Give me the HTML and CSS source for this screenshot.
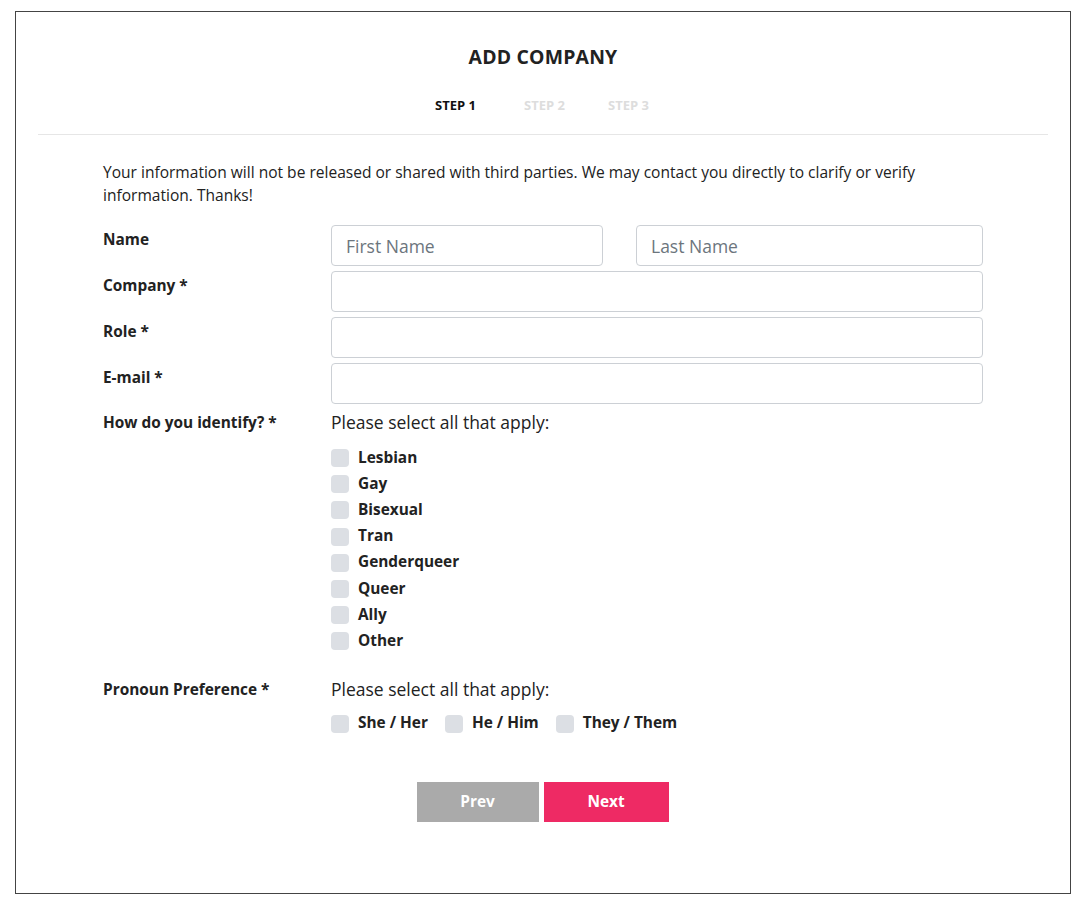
FILE: index.html
```html
<!DOCTYPE html>
<html>
<head>
<meta charset="utf-8">
<link rel="stylesheet" href="styles.css">
</head>
<body>
<div class="frame">
  <header class="head">
    <h1 class="title">ADD COMPANY</h1>
    <nav class="steps">
      <span class="step active">STEP 1</span>
      <span class="step">STEP 2</span>
      <span class="step">STEP 3</span>
    </nav>
  </header>
  <form class="form">
    <p class="intro">Your information will not be released or shared with third parties. We may contact you directly to clarify or verify information. Thanks!</p>
    <div class="row">
      <label class="label">Name</label>
      <div class="field two">
        <input class="input first" type="text" placeholder="First Name">
        <input class="input last" type="text" placeholder="Last Name">
      </div>
    </div>
    <div class="row">
      <label class="label">Company *</label>
      <div class="field"><input class="input" type="text"></div>
    </div>
    <div class="row">
      <label class="label">Role *</label>
      <div class="field"><input class="input" type="text"></div>
    </div>
    <div class="row">
      <label class="label">E-mail *</label>
      <div class="field"><input class="input" type="text"></div>
    </div>
    <div class="row group">
      <label class="label">How do you identify? *</label>
      <div class="field">
        <div class="hint">Please select all that apply:</div>
        <ul class="checks">
          <li class="check"><span class="box"></span>Lesbian</li>
          <li class="check"><span class="box"></span>Gay</li>
          <li class="check"><span class="box"></span>Bisexual</li>
          <li class="check"><span class="box"></span>Tran</li>
          <li class="check"><span class="box"></span>Genderqueer</li>
          <li class="check"><span class="box"></span>Queer</li>
          <li class="check"><span class="box"></span>Ally</li>
          <li class="check"><span class="box"></span>Other</li>
        </ul>
      </div>
    </div>
    <div class="row group pron">
      <label class="label">Pronoun Preference *</label>
      <div class="field">
        <div class="hint">Please select all that apply:</div>
        <ul class="checks inline">
          <li class="check"><span class="box"></span>She / Her</li>
          <li class="check"><span class="box"></span>He / Him</li>
          <li class="check"><span class="box"></span>They / Them</li>
        </ul>
      </div>
    </div>
    <div class="actions">
      <button type="button" class="btn prev">Prev</button>
      <button type="button" class="btn next">Next</button>
    </div>
  </form>
</div>
</body>
</html>
```

FILE: styles.css
```css
* { box-sizing: border-box; }
html, body { margin: 0; padding: 0; background: #fff; }
body {
  padding: 11px 15px;
  font-family: "Open Sans", "Liberation Sans", sans-serif;
  color: #222;
}
.frame {
  width: 1056px;
  height: 883px;
  border: 1px solid #444;
}
.head {
  margin: 0 22px;
  border-bottom: 1px solid #e6e6e6;
  padding-top: 32px;
  height: 123px;
  text-align: center;
}
.title {
  margin: 0;
  font-size: 19.4px;
  line-height: 26px;
  font-weight: 700;
  color: #222;
  letter-spacing: 0.2px;
}
.steps {
  margin-top: 26px;
  display: flex;
  justify-content: center;
  padding-right: 2px;
}
.step {
  font-size: 13px;
  font-weight: 700;
  line-height: 18px;
  color: #ddd;
}
.step:nth-child(2) { margin-left: 48px; }
.step:nth-child(3) { margin-left: 43px; }
.step.active { color: #111; }
.form {
  width: 880px;
  margin: 0 auto;
  padding-top: 26px;
}
.intro {
  margin: 0 0 18px;
  font-size: 15.55px;
  line-height: 23px;
  color: #222;
}
.row {
  display: grid;
  grid-template-columns: 228px 652px;
  margin-bottom: 5px;
}
.label {
  font-size: 15.4px;
  font-weight: 700;
  line-height: 20px;
  padding-top: 5px;
  color: #222;
}
.two {
  display: flex;
  gap: 33px;
}
.input {
  display: block;
  width: 100%;
  height: 41px;
  border: 1px solid #ccd0d5;
  border-radius: 4px;
  padding: 0 14px;
  font-family: "Open Sans", "Liberation Sans", sans-serif;
  font-size: 17.5px;
  color: #495057;
  background: #fff;
  outline: none;
}
.input::placeholder { color: #6c757d; }
.input.first { width: 272px; flex: none; }
.input.last { flex: 1; }
.group .label { padding-top: 4px; }
.hint {
  font-size: 17.5px;
  line-height: 22px;
  color: #222;
  padding-top: 2px;
}
.checks {
  list-style: none;
  margin: 11px 0 0;
  padding: 0;
}
.check {
  display: flex;
  align-items: center;
  height: 26.2px;
  font-size: 15.4px;
  font-weight: 700;
  color: #222;
}
.box {
  width: 18px;
  height: 18px;
  border-radius: 4px;
  background: #dcdfe4;
  margin-right: 9px;
  flex: none;
  margin-top: 2px;
}
.pron { margin-top: 22px; }
.checks.inline {
  display: flex;
  gap: 17px;
  margin-top: 10px;
}
.actions {
  display: flex;
  justify-content: center;
  gap: 5px;
  margin-top: 46px;
  padding-right: 1px;
}
.btn {
  height: 40px;
  border: none;
  border-radius: 0;
  color: #fff;
  font-family: "Open Sans", "Liberation Sans", sans-serif;
  font-size: 15.4px;
  font-weight: 700;
  cursor: pointer;
}
.prev { width: 122px; background: #aaaaaa; }
.next { width: 125px; background: #ee2a64; }
```
